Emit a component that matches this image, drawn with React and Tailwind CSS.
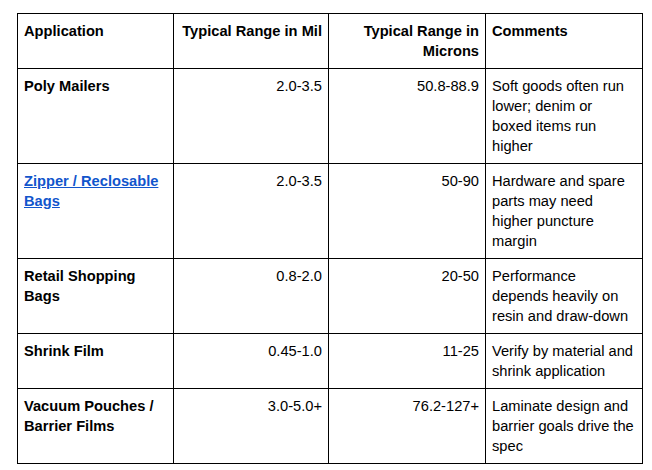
import React from 'react'

const ROWS = [
  { app: 'Poly Mailers', mil: '2.0-3.5', mic: '50.8-88.9', note: ['Soft goods often run', 'lower; denim or', 'boxed items run', 'higher'] },
  { app: 'Zipper / Reclosable Bags', mil: '2.0-3.5', mic: '50-90', note: ['Hardware and spare', 'parts may need', 'higher puncture', 'margin'], link: true },
  { app: 'Retail Shopping Bags', mil: '0.8-2.0', mic: '20-50', note: ['Performance', 'depends heavily on', 'resin and draw-down'] },
  { app: 'Shrink Film', mil: '0.45-1.0', mic: '11-25', note: ['Verify by material and', 'shrink application'] },
  { app: 'Vacuum Pouches / Barrier Films', mil: '3.0-5.0+', mic: '76.2-127+', note: ['Laminate design and', 'barrier goals drive the', 'spec'] },
]

const cell = 'border border-black px-[6px] pt-[7px] pb-[7px] align-top'

export default function App() {
  return (
    <div className="w-[652px] h-[470px] bg-white pt-[13px] pl-[17px] font-['Liberation_Sans',Arial,sans-serif] text-[14.67px] leading-[20px] text-black">
      <table className="table-fixed border-collapse w-[625px]">
        <colgroup>
          <col className="w-[156px]" />
          <col className="w-[155px]" />
          <col className="w-[157px]" />
          <col className="w-[157px]" />
        </colgroup>
        <thead>
          <tr>
            <th className={`${cell} text-left font-bold`}>Application</th>
            <th className={`${cell} text-right font-bold whitespace-nowrap`}>Typical Range in Mil</th>
            <th className={`${cell} text-right font-bold`}>Typical Range in<br />Microns</th>
            <th className={`${cell} text-left font-bold`}>Comments</th>
          </tr>
        </thead>
        <tbody>
          {ROWS.map(r => (
            <tr key={r.app}>
              <td className={`${cell} font-bold`}>
                {r.link
                  ? <a href="#" className="text-[#1155cc] underline">{r.app}</a>
                  : r.app}
              </td>
              <td className={`${cell} text-right`}>{r.mil}</td>
              <td className={`${cell} text-right`}>{r.mic}</td>
              <td className={`${cell} whitespace-nowrap`}>
                {r.note.map(line => <div key={line}>{line}</div>)}
              </td>
            </tr>
          ))}
        </tbody>
      </table>
    </div>
  )
}
